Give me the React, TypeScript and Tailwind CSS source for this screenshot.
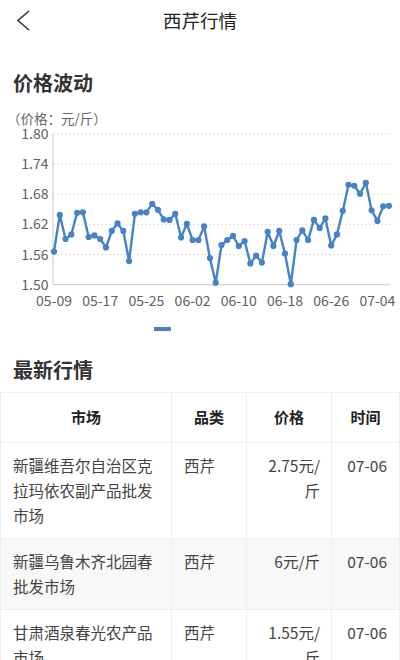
import React from "react";

const prices = [
  1.566, 1.639, 1.591, 1.6, 1.643, 1.644, 1.595, 1.598, 1.591, 1.574, 1.607, 1.622, 1.607, 1.547,
  1.641, 1.644, 1.644, 1.661, 1.649, 1.63, 1.629, 1.641, 1.594, 1.621, 1.589, 1.589, 1.616, 1.553,
  1.504, 1.579, 1.589, 1.597, 1.577, 1.587, 1.542, 1.558, 1.544, 1.605, 1.577, 1.607, 1.562, 1.501,
  1.589, 1.608, 1.589, 1.629, 1.613, 1.632, 1.578, 1.6, 1.647, 1.699, 1.697, 1.681, 1.703, 1.648,
  1.627, 1.656, 1.657,
];

const yTicks = ["1.80", "1.74", "1.68", "1.62", "1.56", "1.50"];
const xTicks = ["05-09", "05-17", "05-25", "06-02", "06-10", "06-18", "06-26", "07-04"];

const rows = [
  { market: "新疆维吾尔自治区克拉玛依农副产品批发市场", kind: "西芹", price: "2.75元/斤", date: "07-06" },
  { market: "新疆乌鲁木齐北园春批发市场", kind: "西芹", price: "6元/斤", date: "07-06" },
  { market: "甘肃酒泉春光农产品市场", kind: "西芹", price: "1.55元/斤", date: "07-06" },
];

// chart drawn in page coordinates (viewBox starts at y=128)
const X0 = 54;
const STEP = 5.775;
const TOP = 135;
const BOTTOM = 285.7;
const toY = (v: number) => TOP + ((1.8 - v) / 0.3) * (BOTTOM - TOP);

function PriceChart() {
  const pts = prices.map((p, i) => [X0 + i * STEP, toY(p)]);
  const line = pts.map(([x, y]) => `${x.toFixed(1)},${y.toFixed(1)}`).join(" ");
  return (
    <svg width="400" height="188" viewBox="0 128 400 188" className="block overflow-visible">
      {yTicks.map((t, i) => {
        const y = TOP + (i * (BOTTOM - TOP)) / 5;
        return (
          <g key={t}>
            {i < 5 && (
              <line x1="53" x2="390" y1={y} y2={y} stroke="#dcdcdc" strokeWidth="1" strokeDasharray="2 2" />
            )}
            <text x="48.5" y={y + 5} textAnchor="end" fontSize="14" fill="#606060">
              {t}
            </text>
          </g>
        );
      })}
      <line x1="53" x2="390" y1={BOTTOM} y2={BOTTOM} stroke="#c8c8c8" strokeWidth="1" />
      <line x1="53" x2="53" y1={TOP} y2={BOTTOM} stroke="#c8c8c8" strokeWidth="1" />
      {xTicks.map((t, i) => (
        <text key={t} x={X0 + i * 8 * STEP} y="307" textAnchor="middle" fontSize="14" fill="#606060">
          {t}
        </text>
      ))}
      <polyline points={line} fill="none" stroke="#4583c6" strokeWidth="2.4" strokeLinejoin="round" />
      {pts.map(([x, y], i) => (
        <circle key={i} cx={x} cy={y} r="3.1" fill="#4583c6" />
      ))}
    </svg>
  );
}

export default function App() {
  return (
    <div
      className="w-[400px] h-[660px] overflow-hidden bg-white text-[#333]"
      style={{ fontFamily: '"Noto Sans CJK SC", "Noto Sans", sans-serif' }}
    >
      <div className="relative h-10 flex items-center justify-center">
        <svg width="16" height="22" viewBox="0 0 16 22" className="absolute left-[16px] top-[9px]">
          <polyline points="13,2 2,11.5 13,21" fill="none" stroke="#333" strokeWidth="1.6" />
        </svg>
        <span className="text-[18.5px] leading-10 text-[#222]">西芹行情</span>
      </div>

      <h2 className="pt-[29px] pl-[13px] text-[20px] leading-[28px] font-bold text-[#333]">价格波动</h2>
      <div className="mt-[13px] pl-[7px] text-[13.5px] leading-[17px] text-[#666]">（价格：元/斤）</div>
      <PriceChart />
      <div className="mt-[12px] ml-[154px] h-[4px] w-[17px] bg-[#4583c6]" />

      <h2 className="mt-[25px] pl-[13px] text-[20px] leading-[28px] font-bold text-[#333]">最新行情</h2>

      <table className="mt-[8px] w-full table-fixed border-collapse border border-[#eeeeee]">
        <thead>
          <tr className="h-[50px]">
            <th className="w-[171px] border border-[#eeeeee] text-[15px] font-bold text-[#222]">市场</th>
            <th className="w-[75px] border border-[#eeeeee] text-[15px] font-bold text-[#222]">品类</th>
            <th className="w-[85px] border border-[#eeeeee] text-[15px] font-bold text-[#222]">价格</th>
            <th className="border border-[#eeeeee] text-[15px] font-bold text-[#222]">时间</th>
          </tr>
        </thead>
        <tbody className="text-[15.5px] leading-[25px] text-[#444]">
          {rows.map((r, i) => (
            <tr key={i} className={i % 2 === 1 ? "bg-[#f8f8f8]" : "bg-white"}>
              <td className="border border-[#eeeeee] px-3 py-[10px] align-top">{r.market}</td>
              <td className="border border-[#eeeeee] px-3 py-[10px] align-top">{r.kind}</td>
              <td className="border border-[#eeeeee] pl-3 pr-[11px] py-[10px] align-top text-right">{r.price}</td>
              <td className="border border-[#eeeeee] pl-2 pr-3 py-[10px] align-top text-right">{r.date}</td>
            </tr>
          ))}
        </tbody>
      </table>
    </div>
  );
}
